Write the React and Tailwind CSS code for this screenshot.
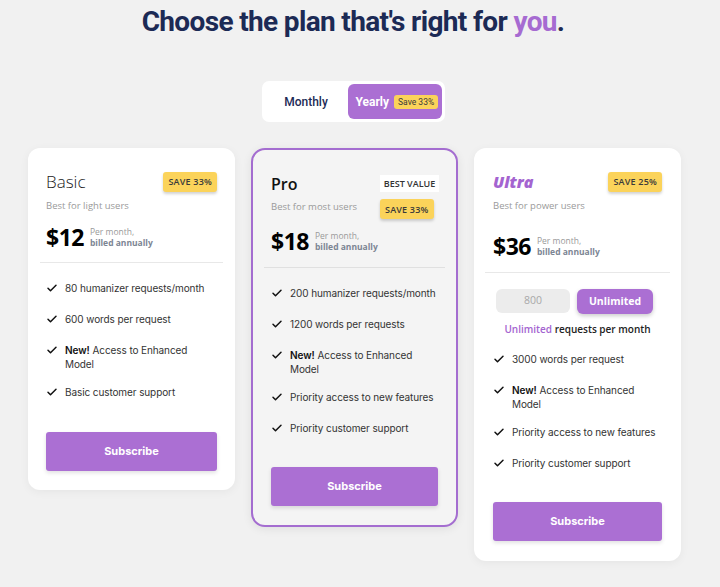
import React from "react";

const Check = () => (
  <svg width="12" height="12" viewBox="0 0 24 24" fill="none" stroke="#111" strokeWidth="3" strokeLinecap="round" strokeLinejoin="round" className="shrink-0 mt-[1px]">
    <path d="M4 12.5l5 5L20 6.5" />
  </svg>
);

const Feature = ({ children, className = "" }) => (
  <li className={"flex items-start gap-[7px] text-[10px] leading-[14px] tracking-[-0.1px] text-[#333] font-['Inter',sans-serif] " + className}>
    <Check />
    <span>{children}</span>
  </li>
);

const NewFeature = () => (
  <li className="flex items-start gap-[7px] text-[10px] leading-[14px] tracking-[-0.1px] text-[#333] font-['Inter',sans-serif] mb-[-3px]">
    <Check />
    <div className="flex flex-col">
      <div className="flex gap-[3px]">
        <b className="font-semibold text-[#111]">New!</b>
        <span>Access to Enhanced</span>
      </div>
      <span>Model</span>
    </div>
  </li>
);

const Badge = ({ children }) => (
  <span className="inline-flex items-center h-[20px] px-[5px] rounded-[3px] text-[9px] font-semibold tracking-[0.2px] bg-[#fbd35a] text-[#3a3a3a] shadow-[0_2px_3px_rgba(0,0,0,0.18)] font-['Open_Sans',sans-serif]">
    {children}
  </span>
);

const Price = ({ amount }) => (
  <div className="flex items-center gap-[6px]">
    <span className="text-[23px] font-bold text-black font-['Open_Sans',sans-serif] leading-[28px] tracking-[-0.5px]">{amount}</span>
    <div className="flex flex-col text-[8.5px] leading-[11px] text-[#9a9a9a] font-['Open_Sans',sans-serif]">
      <span>Per month,</span>
      <span className="font-bold text-[#7c8593]">billed annually</span>
    </div>
  </div>
);

const Subscribe = () => (
  <button className="w-full h-[39px] rounded-[3px] bg-[#ab6fd3] text-white text-[11px] font-bold font-['Inter',sans-serif] shadow-[0_2px_4px_rgba(0,0,0,0.12)]">
    Subscribe
  </button>
);

export default function App() {
  return (
    <div className="w-[720px] h-[587px] bg-[#f1f1f1] overflow-hidden relative">
      <h1 className="pt-[6px] pr-[14px] text-center text-[28px] leading-[32px] font-bold text-[#1c2a55] font-['Roboto',sans-serif] tracking-[-0.65px]">
        Choose the plan that's right for <span className="text-[#a66bd1]">you</span>.
      </h1>

      <div className="mt-[43px] flex justify-center">
        <div className="ml-[-14px] w-[183px] h-[41px] bg-white rounded-[7px] flex items-center pl-[3px] pr-[3px]">
          <span className="w-[83px] text-center text-[12px] font-medium text-[#1c2a55] font-['Roboto',sans-serif]">Monthly</span>
          <div className="w-[94px] h-[35px] rounded-[6px] bg-[#ab6fd3] flex items-center pl-[8px] gap-[5px]">
            <span className="text-[12px] font-bold text-white font-['Roboto',sans-serif]">Yearly</span>
            <span className="h-[14px] px-[4px] rounded-[3px] bg-[#fbd35a] text-[8.5px] leading-[14px] text-[#3a3a3a] font-['Roboto',sans-serif]">Save 33%</span>
          </div>
        </div>
      </div>

      <div className="mt-[26px] flex items-start gap-[16px] pl-[28px]">
        {/* Basic */}
        <div className="w-[207px] bg-white rounded-[12px] shadow-[0_2px_10px_rgba(0,0,0,0.05)] px-[18px] pt-[24px] pb-[19px]">
          <div className="flex items-center justify-between h-[20px]">
            <span className="text-[17px] font-light text-[#222] font-['Open_Sans',sans-serif]">Basic</span>
            <Badge>SAVE 33%</Badge>
          </div>
          <div className="mt-[8px] text-[9.5px] leading-[12px] text-[#9a9a9a] font-['Open_Sans',sans-serif]">Best for light users</div>
          <div className="mt-[11px]"><Price amount="$12" /></div>
          <div className="mt-[11px] mx-[-6px] h-px bg-[#e8e8e8]" />
          <ul className="mt-[18px] flex flex-col gap-[17px]">
            <Feature>80 humanizer requests/month</Feature>
            <Feature>600 words per request</Feature>
            <NewFeature />
            <Feature>Basic customer support</Feature>
          </ul>
          <div className="mt-[33px]"><Subscribe /></div>
        </div>

        {/* Pro */}
        <div className="w-[207px] bg-[#f4f4f4] rounded-[14px] border-2 border-[#a46dd0] shadow-[0_2px_10px_rgba(0,0,0,0.08)] px-[18px] pt-[25px] pb-[19px]">
          <div className="flex items-center justify-between h-[17px]">
            <span className="text-[16px] font-semibold text-[#111] font-['Open_Sans',sans-serif]">Pro</span>
            <span className="w-[59px] mr-[-1px] inline-flex items-center justify-center h-[17px] bg-white text-[9px] font-semibold text-[#333] font-['Open_Sans',sans-serif]">BEST VALUE</span>
          </div>
          <div className="mt-[5px] flex items-center justify-between h-[20px]">
            <span className="text-[9.5px] leading-[12px] text-[#9a9a9a] font-['Open_Sans',sans-serif]">Best for most users</span>
            <span className="w-[59px] mr-[-1px]"><Badge>SAVE 33%</Badge></span>
          </div>
          <div className="mt-[10px]"><Price amount="$18" /></div>
          <div className="mt-[12px] mx-[-7px] h-px bg-[#e0e0e0]" />
          <ul className="mt-[18px] flex flex-col gap-[17px]">
            <Feature>200 humanizer requests/month</Feature>
            <Feature>1200 words per requests</Feature>
            <NewFeature />
            <Feature>Priority access to new features</Feature>
            <Feature>Priority customer support</Feature>
          </ul>
          <div className="mt-[32px]"><Subscribe /></div>
        </div>

        {/* Ultra */}
        <div className="w-[207px] bg-white rounded-[12px] shadow-[0_2px_10px_rgba(0,0,0,0.05)] px-[19px] pt-[24px] pb-[20px]">
          <div className="flex items-center justify-between h-[20px]">
            <span className="text-[16px] font-black italic text-[#a464d0] font-['Open_Sans',sans-serif]">Ultra</span>
            <Badge>SAVE 25%</Badge>
          </div>
          <div className="mt-[8px] text-[9.5px] leading-[12px] text-[#9a9a9a] font-['Open_Sans',sans-serif]">Best for power users</div>
          <div className="mt-[20px]"><Price amount="$36" /></div>
          <div className="mt-[12px] mx-[-8px] h-px bg-[#e8e8e8]" />
          <div className="mt-[16px] flex gap-[7px] pl-[3px]">
            <div className="w-[74px] h-[24px] rounded-[6px] bg-[#ececec] flex items-center justify-center text-[10.5px] text-[#a8a8a8] font-['Open_Sans',sans-serif]">800</div>
            <div className="w-[76px] h-[25px] rounded-[6px] bg-[#ab6fd3] shadow-[0_2px_4px_rgba(0,0,0,0.2)] flex items-center justify-center text-[10.5px] font-bold text-white font-['Open_Sans',sans-serif]">Unlimited</div>
          </div>
          <div className="mt-[9px] text-center text-[10px] leading-[13px] font-semibold text-[#222] font-['Open_Sans',sans-serif]">
            <span className="text-[#a464d0]">Unlimited</span> requests per month
          </div>
          <ul className="mt-[16px] flex flex-col gap-[17px]">
            <Feature>3000 words per request</Feature>
            <NewFeature />
            <Feature>Priority access to new features</Feature>
            <Feature>Priority customer support</Feature>
          </ul>
          <div className="mt-[32px]"><Subscribe /></div>
        </div>
      </div>
    </div>
  );
}
